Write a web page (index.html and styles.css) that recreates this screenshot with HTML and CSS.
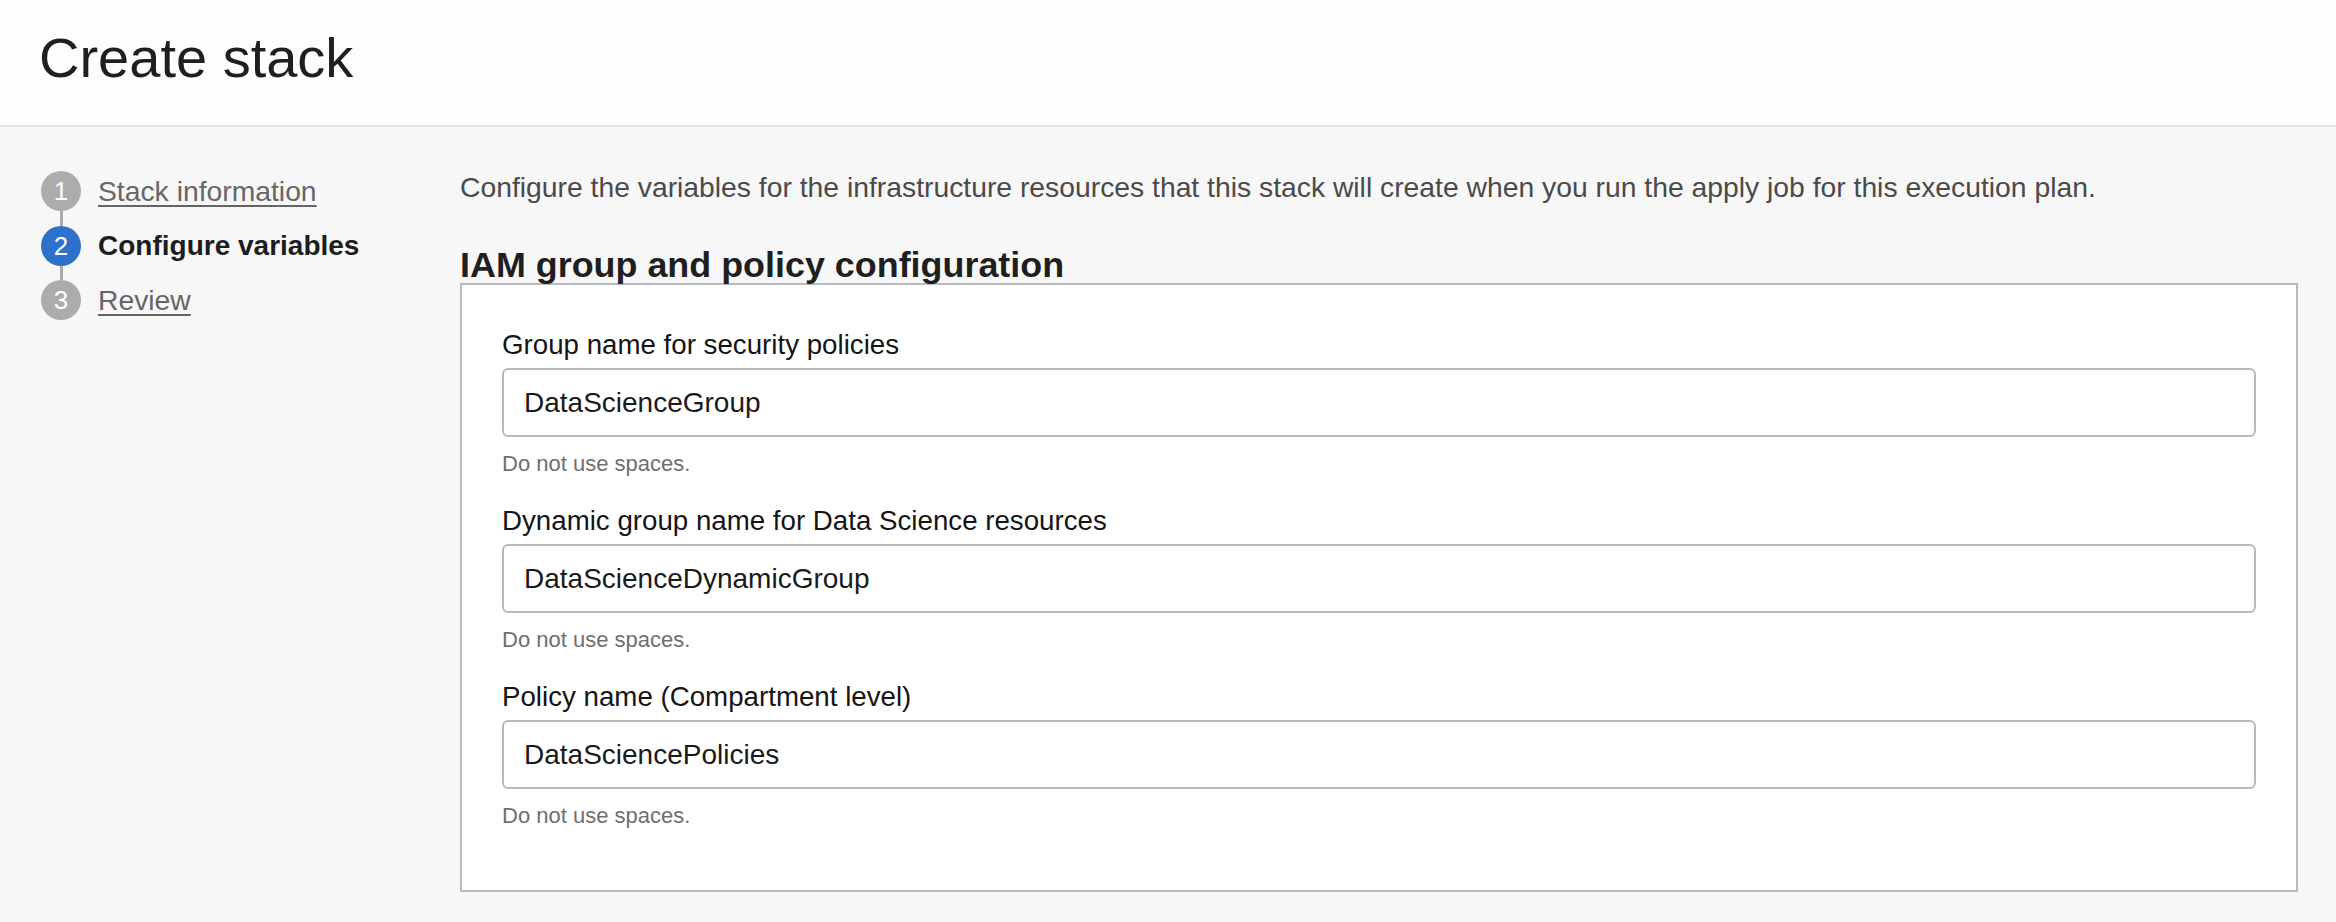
FILE: index.html
```html
<!DOCTYPE html>
<html lang="en">
<head>
<meta charset="utf-8">
<title>Create stack</title>
<link rel="stylesheet" href="styles.css">
</head>
<body>
<header class="page-header">
  <h1 class="page-title">Create stack</h1>
</header>
<div class="page-body">
  <nav class="steps">
    <div class="step">
      <span class="step-num">1</span>
      <a class="step-link" href="#">Stack information</a>
    </div>
    <div class="step-connector"></div>
    <div class="step">
      <span class="step-num step-num-active">2</span>
      <span class="step-current">Configure variables</span>
    </div>
    <div class="step-connector"></div>
    <div class="step">
      <span class="step-num">3</span>
      <a class="step-link" href="#">Review</a>
    </div>
  </nav>
  <main class="content">
    <p class="intro">Configure the variables for the infrastructure resources that this stack will create when you run the apply job for this execution plan.</p>
    <h2 class="section-title">IAM group and policy configuration</h2>
    <section class="panel">
      <div class="field">
        <label class="field-label">Group name for security policies</label>
        <div class="field-input">DataScienceGroup</div>
        <div class="field-help">Do not use spaces.</div>
      </div>
      <div class="field">
        <label class="field-label">Dynamic group name for Data Science resources</label>
        <div class="field-input">DataScienceDynamicGroup</div>
        <div class="field-help">Do not use spaces.</div>
      </div>
      <div class="field">
        <label class="field-label">Policy name (Compartment level)</label>
        <div class="field-input">DataSciencePolicies</div>
        <div class="field-help">Do not use spaces.</div>
      </div>
    </section>
  </main>
</div>
</body>
</html>
```
FILE: styles.css
```css
* { box-sizing: border-box; }

html, body {
  margin: 0;
  padding: 0;
}

body {
  background: #f7f7f7;
  font-family: "Liberation Sans", Arial, Helvetica, sans-serif;
  color: #1f1f1f;
  width: 2336px;
  height: 922px;
  overflow: hidden;
}

.page-header {
  background: #fdfdfd;
  height: 127px;
  border-bottom: 2px solid #e4e4e4;
  padding: 26px 0 0 39px;
}

.page-title {
  margin: 0;
  font-size: 56px;
  line-height: 64px;
  font-weight: normal;
  color: #1f1f1f;
}

.page-body {
  display: flex;
  align-items: flex-start;
}

.steps {
  width: 460px;
  flex: 0 0 460px;
  padding: 44px 0 0 41px;
  display: flex;
  flex-direction: column;
}

.step {
  display: flex;
  align-items: center;
  gap: 17px;
  height: 40px;
}

.step-connector {
  width: 3px;
  height: 14.5px;
  margin-left: 19px;
  background: #acacac;
}

.step-num {
  width: 40px;
  height: 40px;
  border-radius: 50%;
  background: #acacac;
  color: #fff;
  font-size: 26px;
  line-height: 40px;
  text-align: center;
  flex: 0 0 40px;
}

.step-num-active {
  background: #2e71c9;
}

.step-link {
  font-size: 28.3px;
  color: #666;
  text-decoration: underline;
  text-decoration-thickness: 2px;
  text-underline-offset: 4px;
}

.step-current {
  font-size: 28px;
  font-weight: bold;
  color: #1d1d1d;
}

.content {
  flex: 1;
  padding: 43px 38px 0 0;
}

.intro {
  margin: 0;
  font-size: 28.3px;
  line-height: 34px;
  color: #4a4a4a;
}

.section-title {
  margin: 43px 0 0;
  font-size: 35.9px;
  line-height: 36px;
  font-weight: bold;
  color: #1f1f1f;
}

.panel {
  background: #fff;
  border: 2px solid #b7bbc0;
  height: 609px;
  padding: 43px 40px 0;
  display: flex;
  flex-direction: column;
  gap: 27px;
}

.field {
  display: flex;
  flex-direction: column;
}

.field-label {
  font-size: 27.7px;
  line-height: 34px;
  color: #161513;
}

.field-input {
  margin-top: 6px;
  height: 69px;
  border: 2px solid #b7bbc0;
  border-radius: 6px;
  background: #fff;
  padding: 0 20px;
  font-size: 28px;
  line-height: 65px;
  color: #1a1a1a;
}

.field-help {
  margin-top: 14px;
  font-size: 22px;
  line-height: 26px;
  color: #6f6f6f;
}
```
